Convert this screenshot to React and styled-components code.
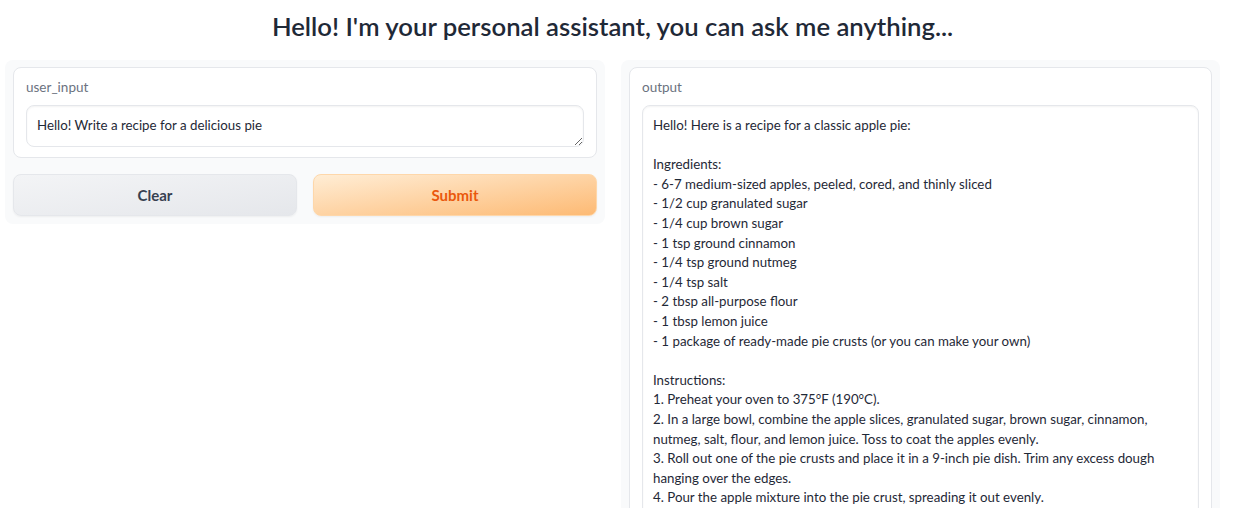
import React from "react";
import styled, { createGlobalStyle } from "styled-components";

const GlobalStyle = createGlobalStyle`
  html, body {
    margin: 0;
    padding: 0;
    background: #ffffff;
    font-family: Lato, "Noto Sans", sans-serif;
    color: #1f2937;
  }
  * { box-sizing: border-box; }
`;

const Page = styled.div`
  width: 1215px;
  margin-left: 5px;
  padding-top: 10px;
`;

const Title = styled.h1`
  margin: 0 0 18px;
  text-align: center;
  font-size: 25.7px;
  line-height: 32px;
  font-weight: 600;
  color: #1f2937;
`;

const Columns = styled.div`
  display: grid;
  grid-template-columns: 600px 599px;
  gap: 16px;
  align-items: start;
`;

const Panel = styled.div`
  background: #f9fafb;
  border-radius: 8px;
  padding: 7px 8px 8px;
  display: flex;
  flex-direction: column;
  gap: 16px;
`;

const Block = styled.div`
  background: #ffffff;
  border: 1px solid #e5e7eb;
  border-radius: 8px;
  padding: 11px 12px 10px;
`;

const Label = styled.div`
  font-size: 13.5px;
  line-height: 16px;
  color: #6b7280;
  margin-bottom: 10px;
`;

const TextArea = styled.textarea`
  display: block;
  width: 100%;
  resize: ${(p) => (p.readOnly ? "none" : "vertical")};
  border: 1px solid #e5e7eb;
  border-radius: 8px;
  padding: 10px;
  font-family: Lato, "Noto Sans", sans-serif;
  font-size: 13.3px;
  line-height: 19.6px;
  color: #1f2937;
  background: #ffffff;
  box-shadow: inset 0 1px 2px rgba(0, 0, 0, 0.05);
  outline: none;
  overflow: hidden;
`;

const Buttons = styled.div`
  display: grid;
  grid-template-columns: 1fr 1fr;
  gap: 16px;
`;

const Button = styled.button`
  height: 42px;
  border-radius: 8px;
  font-family: Lato, "Noto Sans", sans-serif;
  font-size: 15px;
  font-weight: 700;
  cursor: pointer;
  border: 1px solid ${(p) => (p.$primary ? "#fed7aa" : "#e5e7eb")};
  color: ${(p) => (p.$primary ? "#ea580c" : "#374151")};
  background: ${(p) =>
    p.$primary
      ? "linear-gradient(to bottom right, #ffedd5, #fdba74)"
      : "linear-gradient(to bottom right, #f3f4f6, #e5e7eb)"};
  box-shadow: 0 1px 2px rgba(0, 0, 0, 0.05);
`;

const recipe = `Hello! Here is a recipe for a classic apple pie:

Ingredients:
- 6-7 medium-sized apples, peeled, cored, and thinly sliced
- 1/2 cup granulated sugar
- 1/4 cup brown sugar
- 1 tsp ground cinnamon
- 1/4 tsp ground nutmeg
- 1/4 tsp salt
- 2 tbsp all-purpose flour
- 1 tbsp lemon juice
- 1 package of ready-made pie crusts (or you can make your own)

Instructions:
1. Preheat your oven to 375°F (190°C).
2. In a large bowl, combine the apple slices, granulated sugar, brown sugar, cinnamon, nutmeg, salt, flour, and lemon juice. Toss to coat the apples evenly.
3. Roll out one of the pie crusts and place it in a 9-inch pie dish. Trim any excess dough hanging over the edges.
4. Pour the apple mixture into the pie crust, spreading it out evenly.
5. Roll out the second pie crust and place it over the filling. Crimp the edges to seal.
6. Cut a few slits in the top crust to allow steam to escape.
7. Bake for 45-50 minutes, or until the crust is golden brown and the filling is bubbling.
8. Let the pie cool for at least 2 hours before serving.

Enjoy your delicious homemade apple pie!`;

export default function App() {
  return (
    <>
      <GlobalStyle />
      <Page>
        <Title>Hello! I'm your personal assistant, you can ask me anything...</Title>
        <Columns>
          <Panel>
            <Block>
              <Label>user_input</Label>
              <TextArea rows={1} defaultValue="Hello! Write a recipe for a delicious pie" />
            </Block>
            <Buttons>
              <Button>Clear</Button>
              <Button $primary>Submit</Button>
            </Buttons>
          </Panel>
          <Panel>
            <Block>
              <Label>output</Label>
              <TextArea readOnly rows={30} value={recipe} />
            </Block>
          </Panel>
        </Columns>
      </Page>
    </>
  );
}
